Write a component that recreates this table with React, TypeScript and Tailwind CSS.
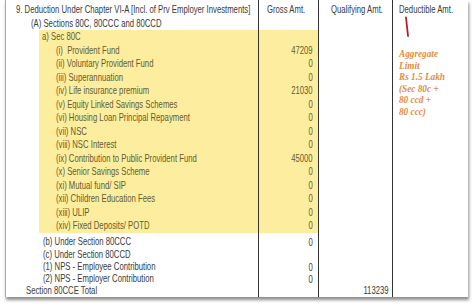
const rows80c: [string, string][] = [
  ['(i)  Provident Fund', '47209'],
  ['(ii) Voluntary Provident Fund', '0'],
  ['(iii) Superannuation', '0'],
  ['(iv) Life insurance premium', '21030'],
  ['(v) Equity Linked Savings Schemes', '0'],
  ['(vi) Housing Loan Principal Repayment', '0'],
  ['(vii) NSC', '0'],
  ['(viii) NSC Interest', '0'],
  ['(ix) Contribution to Public Provident Fund', '45000'],
  ['(x) Senior Savings Scheme', '0'],
  ['(xi) Mutual fund/ SIP', '0'],
  ['(xii) Children Education Fees', '0'],
  ['(xiii) ULIP', '0'],
  ['(xiv) Fixed Deposits/ POTD', '0'],
];

const lowerRows: [string, string][] = [
  ['(b) Under Section 80CCC', '0'],
  ['(c) Under Section 80CCD', ''],
  ['(1) NPS - Employee Contribution', '0'],
  ['(2) NPS - Employer Contribution', '0'],
];

// the screenshot is squeezed sideways, so text is narrowed to match
function T({ children, right = false }: { children: React.ReactNode; right?: boolean }) {
  return (
    <span className={`inline-block whitespace-pre scale-x-[0.75] ${right ? 'origin-right' : 'origin-left'}`}>
      {children}
    </span>
  );
}

export default function App() {
  return (
    <div className="w-[474px] h-[307px] bg-white overflow-hidden font-['Liberation_Sans',Arial,sans-serif] text-[10.3px] text-[#3a3a3a]">
      <div className="ml-[5px] w-[463px] h-[297px] bg-white border-l border-[#aaa] shadow-[1px_3px_3px_rgba(0,0,0,0.45)] flex">
        {/* label column */}
        <div className="w-[253px] border-r-[1.5px] border-[#333] flex flex-col pt-[3px]">
          <div className="h-[14px] leading-[14px] pl-[10px]">
            <T>9. Deduction Under Chapter VI-A [Incl. of Prv Employer Investments]</T>
          </div>
          <div className="h-[13px] leading-[13px] pl-[25px]">
            <T>(A) Sections 80C, 80CCC and 80CCD</T>
          </div>
          <div className="ml-[33px] bg-[#fdee9f] text-[#675b2c]">
            <div className="h-[13.5px] leading-[13.5px] pl-[3px]">
              <T>a) Sec 80C</T>
            </div>
            {rows80c.map(([label]) => (
              <div key={label} className="h-[13.5px] leading-[13.5px] pl-[17px]">
                <T>{label}</T>
              </div>
            ))}
          </div>
          <div className="h-[3px]" />
          {lowerRows.map(([label], i) => (
            <div key={label} className={`${i < 2 ? 'h-[13px] leading-[13px]' : 'h-[12px] leading-[12px]'} pl-[37px]`}>
              <T>{label}</T>
            </div>
          ))}
          <div className="h-[12px] leading-[12px] pl-[20px]">
            <T>Section 80CCE Total</T>
          </div>
        </div>

        {/* gross column */}
        <div className="w-[65px] border-r-[1.5px] border-[#333] flex flex-col pt-[3px] text-right">
          <div className="h-[14px] leading-[14px] pl-[8px] text-left">
            <T>Gross Amt.</T>
          </div>
          <div className="h-[13px]" />
          <div className="bg-[#fdee9f] text-[#675b2c] pr-[5px]">
            <div className="h-[13.5px]" />
            {rows80c.map(([label, v]) => (
              <div key={label} className="h-[13.5px] leading-[13.5px]">
                <T right>{v}</T>
              </div>
            ))}
          </div>
          <div className="h-[3px]" />
          {lowerRows.map(([label, v], i) => (
            <div key={label} className={`${i < 2 ? 'h-[13px] leading-[13px]' : 'h-[12px] leading-[12px]'} pr-[5px]`}>
              <T right>{v}</T>
            </div>
          ))}
        </div>

        {/* qualifying column */}
        <div className="w-[74px] border-r-[1.5px] border-[#333] flex flex-col justify-between pt-[3px]">
          <div className="h-[14px] leading-[14px] pl-[12px]">
            <T>Qualifying Amt.</T>
          </div>
          <div className="h-[12px] leading-[12px] text-right pr-[3px]">
            <T right>113239</T>
          </div>
        </div>

        {/* deductible column */}
        <div className="flex-1 flex flex-col pt-[3px] pl-[6px]">
          <div className="h-[14px] leading-[14px]">
            <T>Deductible Amt.</T>
          </div>
          <svg width="20" height="22" className="ml-[4px] -mt-[1px]">
            <path d="M3 1.5 L5 20" stroke="#b3202a" strokeWidth="1.8" strokeLinecap="round" />
          </svg>
          <div className="mt-[10px] origin-left scale-x-[0.88] font-['Liberation_Serif','Times_New_Roman',serif] italic font-bold text-[10.5px] leading-[11.6px] text-[#e28d3e]">
            Aggregate
            <br />
            Limit
            <br />
            Rs 1.5 Lakh
            <br />
            (Sec 80c +
            <br />
            80 ccd +
            <br />
            80 ccc)
          </div>
        </div>
      </div>
    </div>
  );
}
